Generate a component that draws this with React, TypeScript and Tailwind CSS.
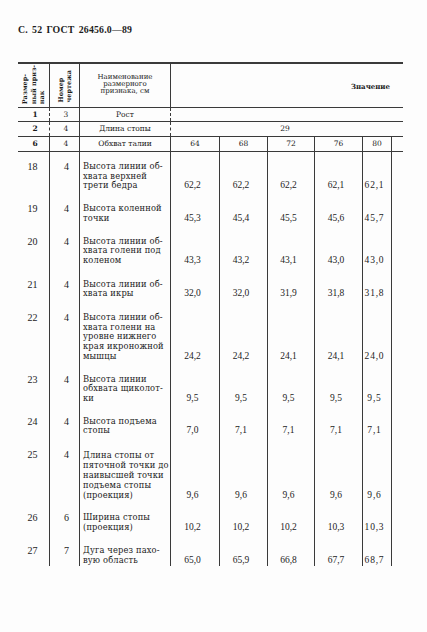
import React from "react";

const serif = "font-['DejaVu_Serif',serif]";
const lib = "font-['Liberation_Serif',serif]";

type Row = { n: string; d: string; name: string[]; v: string[]; pt: string; lh?: string };

const rows: Row[] = [
  { n: "18", d: "4", name: ["Высота линии об-", "хвата верхней", "трети бедра"], v: ["62,2", "62,2", "62,2", "62,1", "62,1"], pt: "pt-[10px]" },
  { n: "19", d: "4", name: ["Высота коленной", "точки"], v: ["45,3", "45,4", "45,5", "45,6", "45,7"], pt: "pt-[13px]" },
  { n: "20", d: "4", name: ["Высота линии об-", "хвата голени под", "коленом"], v: ["43,3", "43,2", "43,1", "43,0", "43,0"], pt: "pt-[13px]" },
  { n: "21", d: "4", name: ["Высота линии об-", "хвата икры"], v: ["32,0", "32,0", "31,9", "31,8", "31,8"], pt: "pt-[14px]" },
  { n: "22", d: "4", name: ["Высота линии об-", "хвата голени на", "уровне нижнего", "края икроножной", "мышцы"], v: ["24,2", "24,2", "24,1", "24,1", "24,0"], pt: "pt-[14px]" },
  { n: "23", d: "4", name: ["Высота линии", "обхвата щиколот-", "ки"], v: ["9,5", "9,5", "9,5", "9,5", "9,5"], pt: "pt-[13px]" },
  { n: "24", d: "4", name: ["Высота подъема", "стопы"], v: ["7,0", "7,1", "7,1", "7,1", "7,1"], pt: "pt-[13px]" },
  { n: "25", d: "4", name: ["Длина стопы от", "пяточной точки до", "наивысшей точки", "подъема стопы", "(проекция)"], v: ["9,6", "9,6", "9,6", "9,6", "9,6"], pt: "pt-[14px]", lh: "leading-[10px]" },
  { n: "26", d: "6", name: ["Ширина стопы", "(проекция)"], v: ["10,2", "10,2", "10,2", "10,3", "10,3"], pt: "pt-[13px]" },
  { n: "27", d: "7", name: ["Дуга через пахо-", "вую область"], v: ["65,0", "65,9", "66,8", "67,7", "68,7"], pt: "pt-[14px]" },
];

const grid = "grid grid-cols-[31px_30px_91px_49px_48px_47px_48px_30px_11px]";
const line = "border-[#3a3a3a]";

export default function App() {
  return (
    <div className="w-[427px] h-[632px] bg-[#fdfdfd] text-[#1c1c1c] overflow-hidden">
      <div className="pl-[18px] pt-[24px]">
        <div className={`${lib} font-bold text-[9.8px] leading-[12px] h-[12px] tracking-[0.2px] [word-spacing:1.5px]`}>
          С. 52 ГОСТ 26456.0—89
        </div>

        <div className="mt-[26px] w-[385px]">
          {/* header */}
          <div className={`${grid} h-[46px] border-t-2 border-b ${line}`}>
            <div className="flex justify-center items-end pb-[3px]">
              <div className={`${serif} font-bold text-[6.5px] leading-[8.5px] [writing-mode:vertical-rl] rotate-180`}>
                Размер-<br />ный приз-<br />нак
              </div>
            </div>
            <div className={`border-l ${line} flex justify-center items-end pb-[5px]`}>
              <div className={`${serif} font-bold text-[6.5px] leading-[8px] [writing-mode:vertical-rl] rotate-180`}>
                Номер<br />чертежа
              </div>
            </div>
            <div className={`border-l ${line} flex items-center justify-center pb-[2px]`}>
              <div className={`${serif} text-[7px] leading-[7.3px] text-center`}>
                Наименование<br />размерного<br />признака, см
              </div>
            </div>
            <div className={`col-span-6 border-l ${line} flex items-center justify-end pr-[13px] pt-[2px]`}>
              <div className={`${serif} font-bold text-[7px] leading-[8px]`}>Значение</div>
            </div>
          </div>

          {/* row 1 */}
          <div className={`${grid} h-[14px] border-b ${line} ${serif} text-[7.5px] leading-[13px]`}>
            <div className="text-center pl-[3px] font-bold">1</div>
            <div className={`border-l border-dashed ${line} text-center pl-[3px]`}>3</div>
            <div className={`border-l ${line} text-center`}>Рост</div>
            <div className={`col-span-6 border-l border-dashed ${line}`}></div>
          </div>
          {/* row 2 */}
          <div className={`${grid} h-[15px] border-b ${line} ${serif} text-[7.5px] leading-[14px]`}>
            <div className="text-center pl-[3px] font-bold">2</div>
            <div className={`border-l border-dashed ${line} text-center pl-[3px]`}>4</div>
            <div className={`border-l ${line} text-center`}>Длина стопы</div>
            <div className={`col-span-6 border-l border-dashed ${line} text-center pr-[4px]`}>29</div>
          </div>
          {/* row 6 */}
          <div className={`${grid} h-[15px] border-b-[1.5px] ${line} ${serif} text-[7.5px] leading-[13px]`}>
            <div className="text-center pl-[3px] font-bold">6</div>
            <div className={`border-l ${line} text-center pl-[3px]`}>4</div>
            <div className={`border-l ${line} text-center`}>Обхват талии</div>
            <div className={`border-l ${line} text-center`}>64</div>
            <div className={`border-l ${line} text-center`}>68</div>
            <div className={`border-l ${line} text-center`}>72</div>
            <div className={`border-l ${line} text-center`}>76</div>
            <div className={`border-l border-r ${line} text-center`}>80</div>
            <div></div>
          </div>

          {/* body */}
          {rows.map((r, i) => (
            <div key={r.n} className={`${grid} ${i === rows.length - 1 ? "pb-[28px]" : ""}`}>
              <div className={`${r.pt} ${lib} text-[10px] leading-[9.7px] text-center pr-[2px]`}>{r.n}</div>
              <div className={`${r.pt} border-l ${line} ${lib} text-[10px] leading-[9.7px] text-center pl-[4px]`}>{r.d}</div>
              <div className={`${r.pt} border-l ${line} ${serif} text-[8.3px] ${r.lh ?? "leading-[9.7px]"} pl-[3px] whitespace-nowrap tracking-[0.15px]`}>
                {r.name.map((l, k) => (
                  <div key={k}>{l}</div>
                ))}
              </div>
              {r.v.map((v, k) => (
                <div
                  key={k}
                  className={`border-l ${k === 4 ? "border-r tracking-[0.8px]" : ""} ${line} flex items-end justify-center pr-[5px] ${lib} text-[9.5px] ${r.lh ?? "leading-[9.7px]"}`}
                >
                  {v}
                </div>
              ))}
              <div></div>
            </div>
          ))}
        </div>
      </div>
    </div>
  );
}
